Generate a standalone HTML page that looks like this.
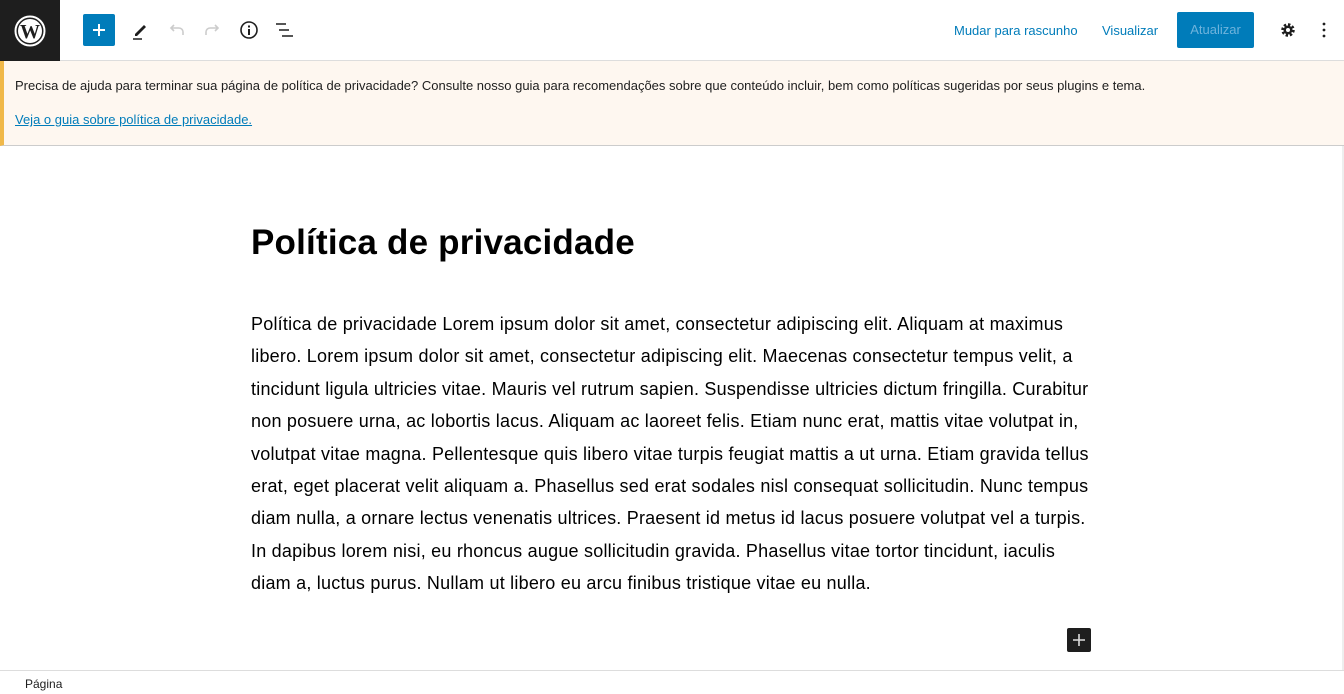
<!DOCTYPE html>
<html><head><meta charset="utf-8"><style>
*{margin:0;padding:0;box-sizing:border-box}
body{width:1344px;height:694px;overflow:hidden;background:#fff;font-family:"Liberation Sans",sans-serif;color:#1e1e1e;position:relative}
.top{position:absolute;left:0;top:0;width:1344px;height:61px;border-bottom:1px solid #ddd;background:#fff}
.wp{position:absolute;left:0;top:0;width:60px;height:61px;background:#1e1e1e}
.ic{position:absolute}
.lnk{position:absolute;top:23px;font-size:13px;color:#007cba}
.btn{position:absolute;left:1177px;top:12px;width:77px;height:36px;background:#007cba;border-radius:2px;color:#6eb3dc;font-size:13px;text-align:center;line-height:36px}
.notice{position:absolute;left:0;top:61px;width:1344px;height:85px;background:#fef7f0;border-left:4px solid #f0b849;border-bottom:1px solid #ccc}
.notice p{position:absolute;left:11px;font-size:13px;color:#1e1e1e;white-space:nowrap}
.notice a{color:#007cba;text-decoration:underline}
h1{position:absolute;left:251px;top:223px;font-size:35px;font-weight:bold;white-space:nowrap;letter-spacing:0.2px;color:#000}
.body{position:absolute;left:251px;top:308px;font-size:18px;letter-spacing:0.22px;line-height:32.4px;white-space:nowrap;color:#000}
.body div{height:32.4px}
.add{position:absolute;left:1067px;top:628px;width:24px;height:24px;background:#1e1e1e;border-radius:2px}
.foot{position:absolute;left:0;top:670px;width:1344px;height:24px;border-top:1px solid #ddd;font-size:12px;padding:6px 0 0 25px}
.sb{position:absolute;right:0;top:146px;width:2px;height:524px;background:#eee}
</style></head><body>
<div class="top">
 <div class="wp"><svg class="ic" style="left:14px;top:15px" width="32" height="32" viewBox="0 0 32 32"><circle cx="16" cy="16" r="14.5" fill="none" stroke="#fff" stroke-width="2"/><circle cx="16" cy="16" r="12" fill="#fff"/><text x="16" y="23" text-anchor="middle" font-family="Liberation Serif,serif" font-weight="bold" font-size="20" fill="#1e1e1e">W</text></svg></div>
 <div class="ic" style="left:83px;top:14px;width:32px;height:32px;background:#007cba;border-radius:2px"><svg width="32" height="32"><path d="M16 10v12M10 16h12" stroke="#fff" stroke-width="2"/></svg></div>
 <svg class="ic" style="left:128px;top:18px" width="24" height="24"><path d="M7 16l9-9 2 2-9 9H7z" fill="#1e1e1e"/><path d="M5 21h9" stroke="#1e1e1e" stroke-width="1.5"/></svg>
 <svg class="ic" style="left:165px;top:18px" width="24" height="24"><path d="M18 17v-3a4 4 0 0 0-4-4H6M9 7l-3 3 3 3" fill="none" stroke="#ccc" stroke-width="1.6"/></svg>
 <svg class="ic" style="left:200px;top:18px" width="24" height="24"><path d="M6 17v-3a4 4 0 0 1 4-4h8M15 7l3 3-3 3" fill="none" stroke="#ccc" stroke-width="1.6"/></svg>
 <svg class="ic" style="left:237px;top:18px" width="24" height="24"><circle cx="12" cy="12" r="8" fill="none" stroke="#1e1e1e" stroke-width="1.6"/><path d="M12 11v6M12 7.5v2" stroke="#1e1e1e" stroke-width="2"/></svg>
 <svg class="ic" style="left:273px;top:18px" width="24" height="24"><path d="M3 6h10M6 12h10M9 18h11" stroke="#1e1e1e" stroke-width="1.6"/></svg>
 <span class="lnk" style="left:954px">Mudar para rascunho</span>
 <span class="lnk" style="left:1102px">Visualizar</span>
 <div class="btn">Atualizar</div>
 <svg class="ic" style="left:1276px;top:18px" width="24" height="24"><circle cx="12" cy="12" r="5" fill="none" stroke="#1e1e1e" stroke-width="3.5" stroke-dasharray="2.2 1.7"/><circle cx="12" cy="12" r="4.5" fill="#1e1e1e"/><circle cx="12" cy="12" r="2" fill="#fff"/></svg>
 <svg class="ic" style="left:1312px;top:18px" width="24" height="24"><circle cx="12" cy="6" r="1.4" fill="#1e1e1e"/><circle cx="12" cy="12" r="1.4" fill="#1e1e1e"/><circle cx="12" cy="18" r="1.4" fill="#1e1e1e"/></svg>
</div>
<div class="notice">
 <p style="top:17px">Precisa de ajuda para terminar sua página de política de privacidade? Consulte nosso guia para recomendações sobre que conteúdo incluir, bem como políticas sugeridas por seus plugins e tema.</p>
 <p style="top:51px"><a>Veja o guia sobre política de privacidade.</a></p>
</div>
<h1>Política de privacidade</h1>
<div class="body">
<div>Política de privacidade Lorem ipsum dolor sit amet, consectetur adipiscing elit. Aliquam at maximus</div>
<div>libero. Lorem ipsum dolor sit amet, consectetur adipiscing elit. Maecenas consectetur tempus velit, a</div>
<div>tincidunt ligula ultricies vitae. Mauris vel rutrum sapien. Suspendisse ultricies dictum fringilla. Curabitur</div>
<div>non posuere urna, ac lobortis lacus. Aliquam ac laoreet felis. Etiam nunc erat, mattis vitae volutpat in,</div>
<div>volutpat vitae magna. Pellentesque quis libero vitae turpis feugiat mattis a ut urna. Etiam gravida tellus</div>
<div>erat, eget placerat velit aliquam a. Phasellus sed erat sodales nisl consequat sollicitudin. Nunc tempus</div>
<div>diam nulla, a ornare lectus venenatis ultrices. Praesent id metus id lacus posuere volutpat vel a turpis.</div>
<div>In dapibus lorem nisi, eu rhoncus augue sollicitudin gravida. Phasellus vitae tortor tincidunt, iaculis</div>
<div>diam a, luctus purus. Nullam ut libero eu arcu finibus tristique vitae eu nulla.</div>
</div>
<div class="add"><svg width="24" height="24"><path d="M12 6v12M6 12h12" stroke="#ddd" stroke-width="1.6"/></svg></div>
<div class="sb"></div>
<div class="foot">Página</div>
</body></html>
